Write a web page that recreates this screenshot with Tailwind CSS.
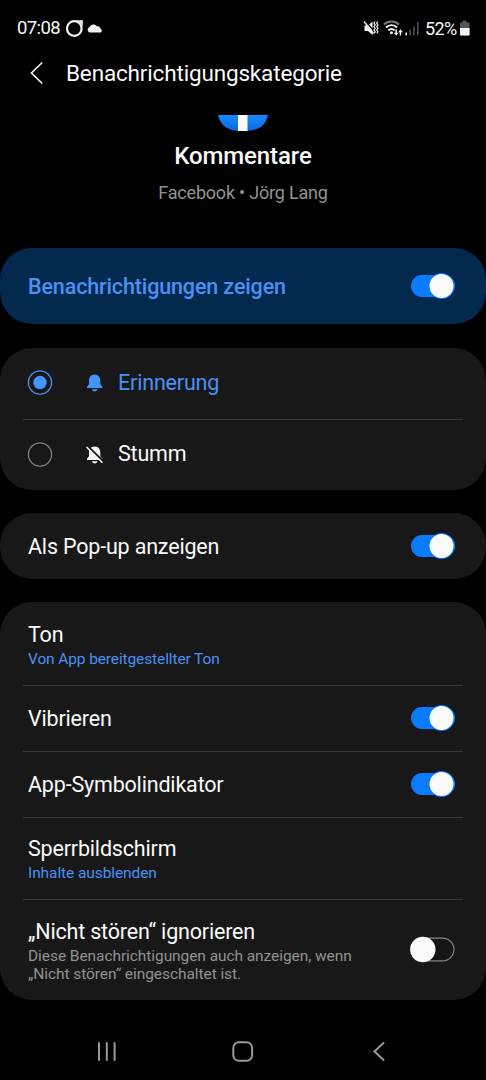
<!DOCTYPE html>
<html lang="de">
<head>
<meta charset="utf-8">
<title>Benachrichtigungskategorie</title>
<script src="https://cdn.jsdelivr.net/npm/@tailwindcss/browser@4"></script>
</head>
<body class="bg-black">
<svg class="hidden">
  <symbol id="on" viewBox="0 0 46 28"><rect x="1" y="3" width="44" height="22" rx="11" fill="#0a7cfd"/><circle cx="31.5" cy="14" r="13" fill="#0a7cfd"/><circle cx="31.5" cy="14" r="12" fill="#fafafa"/></symbol>
</svg>
<main class="w-[486px] h-[1080px] overflow-hidden bg-black text-[#fafafa] flex flex-col font-['Roboto',sans-serif] whitespace-nowrap">
  <header class="h-[48px] shrink-0 flex items-center pl-[17px] pt-[9px] text-[18.5px]">
    <span class="w-[43px] tracking-[-0.6px]">07:08</span>
    <svg class="ml-[5px]" width="20" height="20" viewBox="0 0 20 20"><circle cx="9.300" cy="9.500" r="7.300" fill="none" stroke="#f2f2f2" stroke-width="2.200"/><path d="M9.500 1.200h8.300V9.500c0-4.500-3.500-8.300-8.300-8.300z" fill="#f2f2f2"/></svg>
    <svg class="ml-[1px]" width="18" height="20" viewBox="0 0 18 20"><path d="M3.300 13.400a2.900 2.900 0 0 1 .2-5.300A4.300 4.300 0 0 1 11 7.300a3.200 3.200 0 0 1 3.500 2.300 2.200 2.200 0 0 1 .3 3.800z" fill="#f2f2f2"/></svg>
    <svg class="ml-[259px]" width="60" height="24" viewBox="0 0 60 24">
      <path d="M1.500 8.500H5l4.500-4v13.500L5 14H1.500z" fill="#f2f2f2"/><path d="M2 3.500l10 12" stroke="#000" stroke-width="1.200"/><path d="M1 4.500l9.500 12" stroke="#f2f2f2" stroke-width="1.500"/>
      <path d="M12 4.500l-1 1.700 1.200 1.700-1.200 1.700 1.200 1.700-1.200 1.700 1.200 1.700-1 1.700M14.700 4.500l-1 1.700 1.200 1.700-1.200 1.700 1.200 1.700-1.200 1.700 1.200 1.700-1 1.700" fill="none" stroke="#f2f2f2" stroke-width="1.200"/>
      <g fill="none" stroke-width="1.900"><path d="M21 7.500a10.800 10.800 0 0 1 15 0" stroke="#777"/><path d="M23 10.500a7.600 7.600 0 0 1 11 0M25.300 13.300a4.500 4.500 0 0 1 6.400 0" stroke="#f2f2f2"/></g><circle cx="28.500" cy="15.700" r="1.500" fill="#f2f2f2"/>
      <path d="M30.800 15.800h1.600V12.500h1.500v3.300h1.600l-2.300 3zM35.200 15.200l2.300-3 2.300 3h-1.600v3.300h-1.500v-3.300z" fill="#f2f2f2"/>
      <path d="M43.200 15.500v2.700" stroke="#eee" stroke-width="1.600"/><path d="M47.200 12.500v5.700M51 9.500v8.700M54.800 5v13.200" stroke="#555" stroke-width="1.500"/>
    </svg>
    <span class="ml-[2px] w-[32px] text-[18px] tracking-[-0.65px]">52%</span>
    <svg class="ml-[2px]" width="12" height="20" viewBox="0 0 12 20"><path d="M3.500 1.500h4v2H10.500v13H1v-13h2.500z" fill="#555"/><path d="M1 9h9.500v6.500a1 1 0 0 1-1 1H2a1 1 0 0 1-1-1z" fill="#f2f2f2"/></svg>
  </header>
  <div class="h-[52px] shrink-0 flex items-center">
    <svg class="ml-[29px]" width="16" height="26" viewBox="0 0 16 26"><path d="M12.700 2L2.500 12l10.200 10" fill="none" stroke="#f2f2f2" stroke-width="1.700" stroke-linecap="round"/></svg>
    <h1 class="ml-[21px] -mt-px text-[22.500px] tracking-[-0.160px]">Benachrichtigungskategorie</h1>
  </div>
  <section class="h-[148px] shrink-0 pt-[15px] flex flex-col items-center">
    <svg width="52" height="17" viewBox="0 0 52 17"><defs><linearGradient id="f" x2="0" y2="1"><stop stop-color="#1789fb"/><stop offset="1" stop-color="#0b68e2"/></linearGradient></defs><path d="M1 0h50C48 12 41 16 26 16S4 12 1 0z" fill="url(#f)"/><path d="M21 0h9.500v16H21z" fill="#fff"/></svg>
    <h2 class="mt-[9px] leading-[30px] text-[24px] tracking-[-0.100px] font-medium">Kommentare</h2>
    <p class="mt-[10px] leading-[24px] text-[18px] tracking-[-0.200px] text-[#929292]">Facebook • Jörg Lang</p>
  </section>
  <section class="h-[76px] shrink-0 rounded-[32px] bg-[#04294f] pl-7 pr-[30px] flex items-center justify-between">
    <span class="text-[21.500px] tracking-[-0.130px] font-medium text-[#4a90f5] pt-[3px]">Benachrichtigungen zeigen</span>
    <svg class="w-[46px] h-[28px]"><use href="#on"/></svg>
  </section>
  <section class="mt-[23.500px] h-[142px] shrink-0 rounded-[32px] bg-[#181818] px-[23px]">
    <div class="h-[72px] border-b border-[#3a3a3a] pl-1 flex items-center">
      <svg width="26" height="26" viewBox="0 0 26 26"><circle cx="13" cy="12.500" r="11.600" fill="none" stroke="#4a90f5" stroke-width="1.300"/><circle cx="13" cy="12.500" r="6.700" fill="#4394fd"/></svg>
      <svg class="ml-[32px]" width="20" height="20" viewBox="0 0 20 20" fill="#4394fd"><path d="M9.700 1.500c3.700 0 5.600 2.800 5.600 6v3.700l2 2.500v1.300H2v-1.300l2-2.500V7.500c0-3.200 2-6 5.700-6zM6.800 16.200h5.800c-.6 1.600-1.700 2.200-2.900 2.200s-2.300-.6-2.900-2.200z"/></svg>
      <span class="ml-[13px] text-[21.500px] tracking-[-0.180px] text-[#4a90f5]">Erinnerung</span>
    </div>
    <div class="h-[70px] pl-1 flex items-center">
      <svg width="26" height="26" viewBox="0 0 26 26"><circle cx="13" cy="12.500" r="11.600" fill="none" stroke="#858585" stroke-width="1.200"/></svg>
      <svg class="ml-[32px]" width="20" height="20" viewBox="0 0 20 20" fill="#f5f5f5"><path d="M9.700 1.500c3.700 0 5.600 2.800 5.600 6v3.700l2 2.500v1.300H2v-1.300l2-2.500V7.500c0-3.200 2-6 5.700-6zM6.800 16.200h5.800c-.6 1.600-1.700 2.200-2.900 2.200s-2.300-.6-2.900-2.200z"/><path d="M2.500 1L19 17" stroke="#181818" stroke-width="2"/><path d="M1.500 2L17.500 17.800" stroke="#f5f5f5" stroke-width="1.500"/></svg>
      <span class="ml-[13px] text-[21.500px] tracking-[-0.180px]">Stumm</span>
    </div>
  </section>
  <section class="mt-[23.500px] h-[66px] shrink-0 rounded-[32px] bg-[#181818] pl-7 pr-[30px] flex items-center justify-between">
    <span class="text-[21.500px] tracking-[-0.180px] pt-[3px]">Als Pop-up anzeigen</span>
    <svg class="w-[46px] h-[28px]"><use href="#on"/></svg>
  </section>
  <section class="mt-[23px] h-[398px] shrink-0 rounded-[32px] bg-[#181818] px-[23px]">
    <div class="h-[84px] border-b border-[#3a3a3a] pl-[5px] pt-[20px]">
      <p class="text-[21.500px] tracking-[-0.180px] leading-[26px]">Ton</p>
      <p class="text-[15.500px] tracking-[-0.120px] leading-[22px] text-[#4a90f5]">Von App bereitgestellter Ton</p>
    </div>
    <div class="h-[66px] border-b border-[#3a3a3a] pl-[5px] pr-[7px] flex items-center justify-between">
      <span class="text-[21.500px] tracking-[-0.180px] pt-[2px]">Vibrieren</span>
      <svg class="w-[46px] h-[28px] -mt-[2px]"><use href="#on"/></svg>
    </div>
    <div class="h-[66px] border-b border-[#3a3a3a] pl-[5px] pr-[7px] flex items-center justify-between">
      <span class="text-[21.500px] tracking-[-0.180px] pt-[2px]">App-Symbolindikator</span>
      <svg class="w-[46px] h-[28px] -mt-[2px]"><use href="#on"/></svg>
    </div>
    <div class="h-[82px] border-b border-[#3a3a3a] pl-[5px] pt-[18px]">
      <p class="text-[21.500px] tracking-[-0.180px] leading-[26px]">Sperrbildschirm</p>
      <p class="text-[15.500px] tracking-[-0.090px] leading-[22px] text-[#4a90f5]">Inhalte ausblenden</p>
    </div>
    <div class="h-[100px] pl-[5px] pr-[7px] flex items-center justify-between">
      <div class="pt-px">
        <p class="text-[21.500px] tracking-[-0.180px] leading-[26px]">„Nicht stören“ ignorieren</p>
        <p class="mt-[2px] text-[15.500px] tracking-[-0.070px] leading-[18px] text-[#929292]">Diese Benachrichtigungen auch anzeigen, wenn<br>„Nicht stören“ eingeschaltet ist.</p>
      </div>
      <svg width="46" height="28" viewBox="0 0 46 28"><rect x="1.600" y="2.100" width="42.300" height="22.800" rx="11.400" fill="#151515" stroke="#858585" stroke-width="1.200"/><circle cx="12.800" cy="13.500" r="12.700" fill="#fafafa"/></svg>
    </div>
  </section>
  <nav class="h-[80px] shrink-0 flex items-center pt-[24px]">
    <svg class="mx-auto w-[486px]" height="30" viewBox="0 0 486 30" fill="none" stroke="#999" stroke-width="2" stroke-linecap="round"><path d="M99 6v17M106.800 6v17M114.600 6v17"/><rect x="233.300" y="5.300" width="18.800" height="18.400" rx="5.500"/><path d="M383.500 6L374.500 14.500l9 8.500"/></svg>
  </nav>
</main>
</body>
</html>
